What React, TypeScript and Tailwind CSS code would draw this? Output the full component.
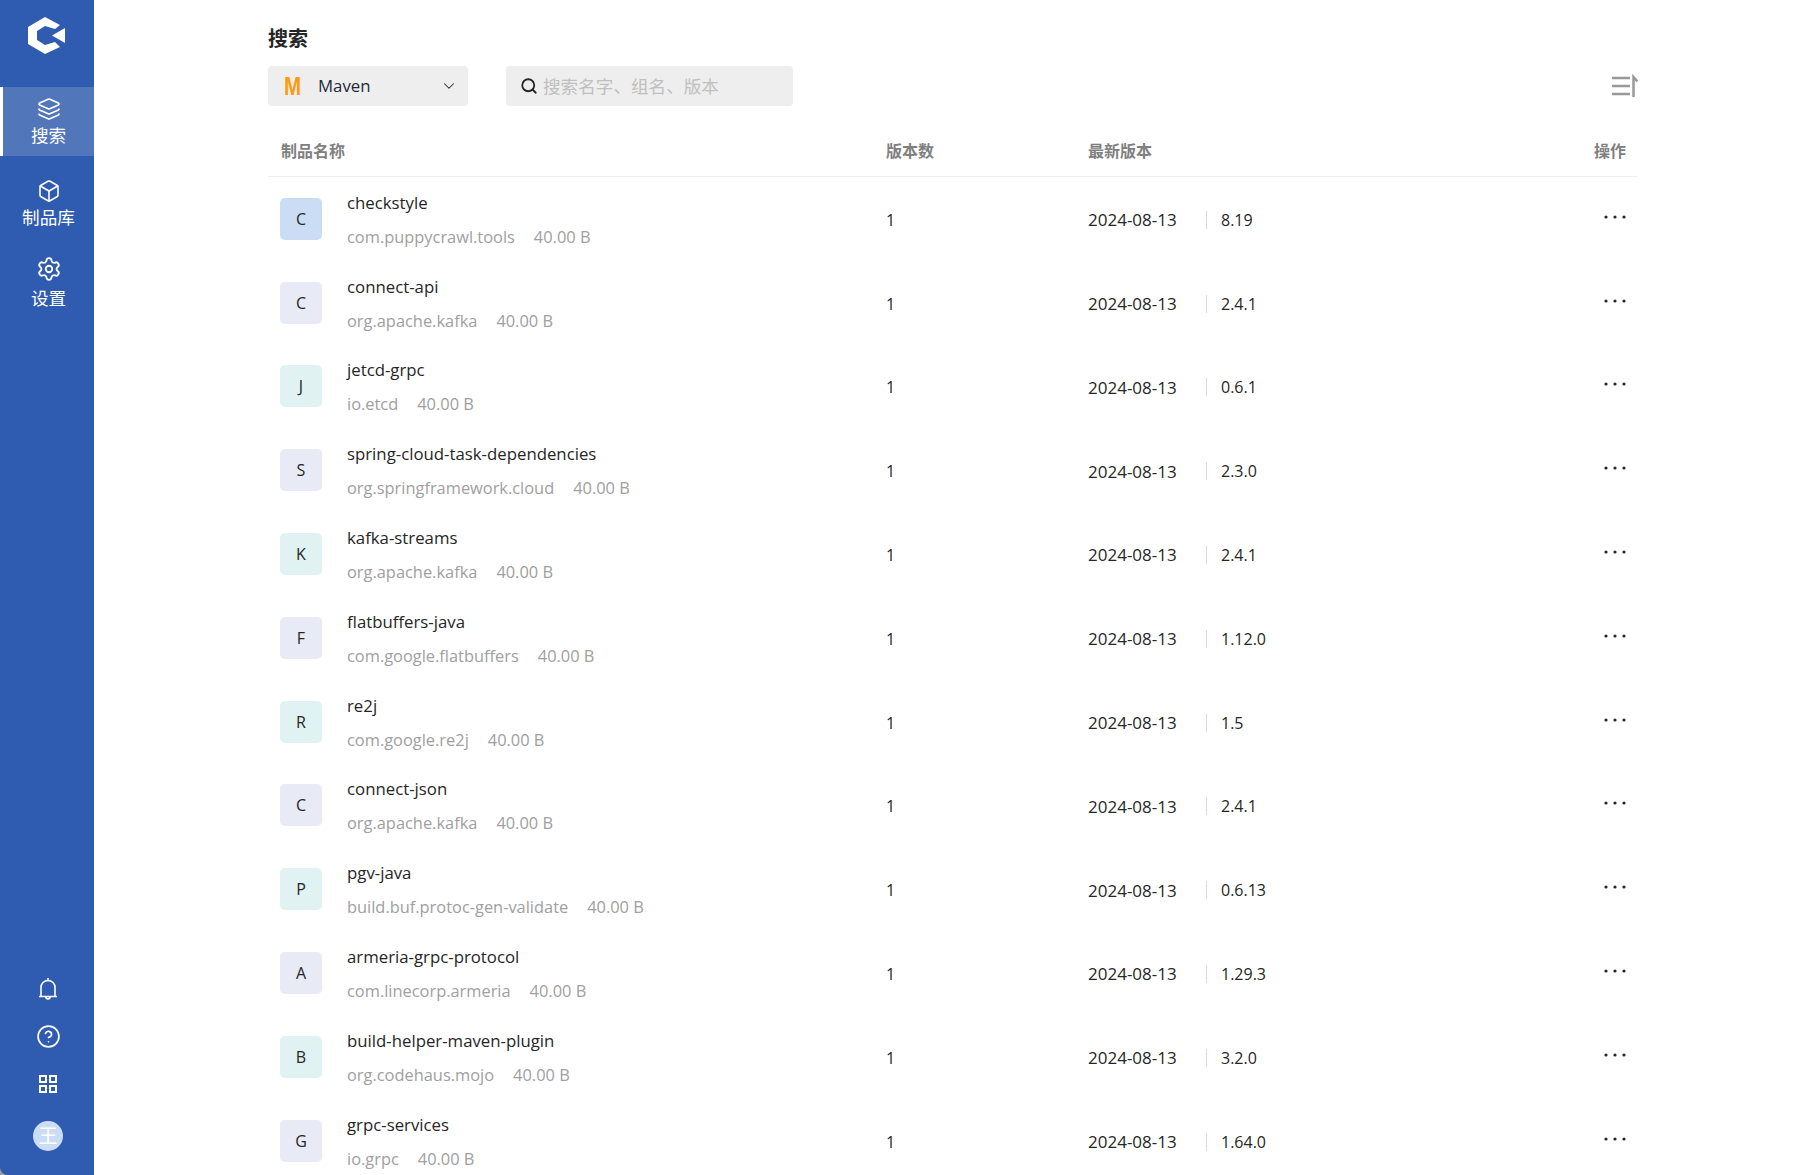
import { Box, ChevronDown, CircleHelp, Layers, Search, Settings } from "lucide-react";

const sans = "font-['Open_Sans','Noto_Sans_CJK_SC',sans-serif]";

const rows = [
  { l: "C", bg: "bg-[#cbdcf5]", name: "checkstyle", group: "com.puppycrawl.tools", ver: "8.19" },
  { l: "C", bg: "bg-[#e8eaf6]", name: "connect-api", group: "org.apache.kafka", ver: "2.4.1" },
  { l: "J", bg: "bg-[#e0f2f1]", name: "jetcd-grpc", group: "io.etcd", ver: "0.6.1" },
  { l: "S", bg: "bg-[#e8eaf6]", name: "spring-cloud-task-dependencies", group: "org.springframework.cloud", ver: "2.3.0" },
  { l: "K", bg: "bg-[#e0f2f1]", name: "kafka-streams", group: "org.apache.kafka", ver: "2.4.1" },
  { l: "F", bg: "bg-[#e8eaf6]", name: "flatbuffers-java", group: "com.google.flatbuffers", ver: "1.12.0" },
  { l: "R", bg: "bg-[#e0f2f1]", name: "re2j", group: "com.google.re2j", ver: "1.5" },
  { l: "C", bg: "bg-[#e8eaf6]", name: "connect-json", group: "org.apache.kafka", ver: "2.4.1" },
  { l: "P", bg: "bg-[#e0f2f1]", name: "pgv-java", group: "build.buf.protoc-gen-validate", ver: "0.6.13" },
  { l: "A", bg: "bg-[#e8eaf6]", name: "armeria-grpc-protocol", group: "com.linecorp.armeria", ver: "1.29.3" },
  { l: "B", bg: "bg-[#e0f2f1]", name: "build-helper-maven-plugin", group: "org.codehaus.mojo", ver: "3.2.0" },
  { l: "G", bg: "bg-[#e8eaf6]", name: "grpc-services", group: "io.grpc", ver: "1.64.0" },
];

const Logo = () => (
  <svg width="38" height="37" viewBox="0 0 38 37" fill="white">
    <path d="M17 0 L32 8 L27 12 L17 9 L9 14 V23 L17 28 L27 25 L32 30 L17 37 L0 27 V10 Z" />
    <path d="M37 11 V26 L24 18.5 Z" />
  </svg>
);

const BellIcon = () => (
  <svg width="24" height="24" viewBox="0 0 24 24" fill="none" stroke="white" strokeWidth="1.6">
    <path d="M12 1V3.5M5 19V10.5C5 6.5 8 3.5 12 3.5C16 3.5 19 6.5 19 10.5V19M3 19.5H21M10 20C10 22.5 14 22.5 14 20" />
  </svg>
);

const GridIcon = () => (
  <svg width="20" height="20" viewBox="0 0 20 20" fill="none" stroke="white" strokeWidth="2">
    <path d="M2 2H8V8H2ZM12 2H18V8H12ZM2 12H8V18H2ZM12 12H18V18H12Z" />
  </svg>
);

const Dots = () => (
  <svg width="22" height="4" viewBox="0 0 22 4" fill="#262626">
    <circle cx="2" cy="2" r="1.6" />
    <circle cx="11" cy="2" r="1.6" />
    <circle cx="20" cy="2" r="1.6" />
  </svg>
);

const NavItem = ({ icon, label, active }: { icon: React.ReactNode; label: string; active?: boolean }) => (
  <div className={`flex h-[69px] flex-col items-center justify-center gap-[3px] border-l-[3px] text-[17.6px] leading-[22px] text-white ${active ? "border-white bg-[#5176ba]" : "border-transparent"}`}>
    {icon}
    <span>{label}</span>
  </div>
);

export default function App() {
  return (
    <div className={`flex h-screen overflow-hidden bg-white ${sans}`}>
      <aside className="w-[94px] shrink-0 bg-[#9a9a9a]">
        <div className="flex h-full flex-col rounded-bl-[8px] bg-[#2f5cb0]">
          <div className="flex h-[87px] items-start justify-center pt-[17px]">
            <Logo />
          </div>
          <NavItem active icon={<Layers size={24} strokeWidth={1.6} />} label="搜索" />
          <div className="mt-[13px] flex flex-col gap-[11px]">
            <NavItem icon={<Box size={24} strokeWidth={1.6} />} label="制品库" />
            <NavItem icon={<Settings size={26} strokeWidth={1.7} className="-translate-y-[2px]" />} label="设置" />
          </div>
          <div className="mt-auto flex flex-col items-center gap-[23px] pb-[24px] pl-[2px] text-white">
            <BellIcon />
            <CircleHelp size={25} strokeWidth={1.6} />
            <div className="flex h-[24px] items-center"><GridIcon /></div>
            <div className="mt-[2px] flex h-[30px] w-[30px] items-center justify-center rounded-full bg-[#cbdcf5] text-[19px] leading-none">王</div>
          </div>
        </div>
      </aside>
      <main className="ml-[174px] w-[1370px] shrink-0">
        <h1 className="mt-[26px] text-[20px] font-bold leading-[26px] text-[#262626]">搜索</h1>
        <div className="mt-[14px] flex items-center">
          <div className="flex h-[40px] w-[200px] items-center rounded-[4px] bg-[#eeeeee] pl-[16px] pr-[10px] text-[16.8px] text-[#1f2937]">
            <span className="inline-block w-[34px] origin-left scale-x-[0.82] font-['Liberation_Sans',sans-serif] text-[25px] font-bold leading-none text-[#ff9a0f]">M</span>
            <span>Maven</span>
            <ChevronDown size={18} strokeWidth={1.4} className="ml-auto" />
          </div>
          <div className="ml-[38px] flex h-[40px] w-[287px] items-center rounded-[4px] bg-[#eeeeee] pl-[14px] text-[17.6px] text-[#bfbfbf]">
            <Search size={18} strokeWidth={2.4} className="mr-[5px] text-[#262626]" />
            <span>搜索名字、组名、版本</span>
          </div>
          <svg className="ml-auto" width="26" height="24" viewBox="0 0 26 24" fill="none" stroke="#999999" strokeWidth="2.5">
            <path d="M0 4H18M0 12H18M0 20H18M21.5 23V3L25.5 7.5" />
          </svg>
        </div>
        <div className="mt-[24px] flex h-[47px] items-center border-b border-[#eeeeee] pb-[5px] pl-[13px] pr-[12px] text-[16px] font-bold text-[#7f7f7f]">
          <span className="w-[605px]">制品名称</span>
          <span className="w-[202px]">版本数</span>
          <span className="flex-1">最新版本</span>
          <span>操作</span>
        </div>
        <div className="mt-[1px]">
          {rows.map((r) => (
            <div key={r.name} className="flex h-[83.8px] items-center pl-[12px] pr-[12px] text-[16px] text-[#262626]">
              <div className={`flex h-[42px] w-[42px] shrink-0 -translate-y-[1px] items-center justify-center rounded-[5px] ${r.bg}`}>{r.l}</div>
              <div className="ml-[25px] w-[539px]">
                <div className="text-[16.8px] leading-[24px]">{r.name}</div>
                <div className="mt-[10px] flex gap-[19px] text-[16.4px] leading-[24px] text-[#a0a0a0]">
                  <span>{r.group}</span>
                  <span>40.00 B</span>
                </div>
              </div>
              <span className="w-[202px]">1</span>
              <span className="w-[90px] text-[17px]">2024-08-13</span>
              <span className="ml-[28px] h-[18px] w-px bg-[#d5d9e8]" />
              <span className="ml-[14px]">{r.ver}</span>
              <div className="ml-auto -mt-[6px]"><Dots /></div>
            </div>
          ))}
        </div>
      </main>
    </div>
  );
}
